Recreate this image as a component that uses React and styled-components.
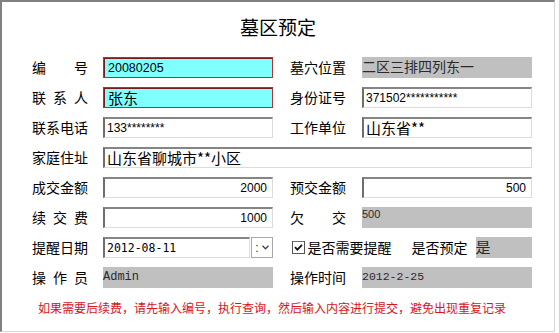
import React from 'react';
import styled, { createGlobalStyle, css } from 'styled-components';

const GlobalStyle = createGlobalStyle`
   html, body {
      margin: 0;
      padding: 0;
      background: #ffffff;
   }
   body {
      font-family: "Noto Sans CJK SC", "Liberation Sans", sans-serif;
      color: #000;
   }
`;

const cjk = `"Noto Sans CJK SC", sans-serif`;

const Frame = styled.div`
   box-sizing: border-box;
   width: 555px;
   height: 332px;
   border-top: 2px solid #808080;
   border-left: 2px solid #808080;
   border-right: 1px solid #d8d8d8;
   border-bottom: 1px solid #d8d8d8;
   background: #ffffff;
   padding-left: 30px;
`;

const Title = styled.h1`
   margin: 0;
   padding-top: 13px;
   margin-left: -30px;
   text-align: center;
   font-family: ${cjk};
   font-size: 19px;
   font-weight: 400;
   line-height: 24px;
   height: 24px;
`;

const FormGrid = styled.div`
   display: grid;
   grid-template-columns: 71px 187px 72px 170px;
   grid-auto-rows: 21px;
   row-gap: 9px;
   margin-top: 18px;
   align-items: center;
`;

const Label = styled.div`
   width: 56px;
   font-family: ${cjk};
   font-size: 14px;
   line-height: 21px;
   white-space: nowrap;
   ${({ spread }) =>
      spread &&
      css`
         text-align: justify;
         text-align-last: justify;
      `};
`;

const fieldVariants = {
   key: css`
      background: #80ffff;
      border: 1px solid #b23030;
      box-shadow: inset 1px 1px 0 #7a1c1c;
      padding-left: 4px;
   `,
   text: css`
      background: #ffffff;
      border-top: 2px solid #858585;
      border-left: 2px solid #6e6e6e;
      border-right: 1px solid #dcdcdc;
      border-bottom: 1px solid #dcdcdc;
      padding-left: 2px;
      padding-right: 5px;
   `,
   readonly: css`
      background: #c0c0c0;
      color: #2a2a2a;
      align-items: flex-start;
   `,
};

const Field = styled.div`
   box-sizing: border-box;
   height: 21px;
   width: ${({ w }) => (w ? `${w}px` : '170px')};
   display: flex;
   align-items: center;
   justify-content: ${({ right }) => (right ? 'flex-end' : 'flex-start')};
   font-family: ${({ font }) => font || `"Liberation Sans", ${cjk}`};
   font-size: ${({ size }) => size || 12}px;
   white-space: nowrap;
   ${({ variant }) => fieldVariants[variant || 'text']};
   ${({ span }) =>
      span &&
      css`
         grid-column: ${span};
         width: auto;
      `};
`;

const FieldText = styled.span`
   line-height: ${({ lh }) => lh || 18}px;
   margin-top: ${({ up }) => (up ? -up : 0)}px;
`;

const DateCell = styled.div`
   display: flex;
   align-items: center;
   gap: 1px;
`;

const DropButton = styled.div`
   box-sizing: border-box;
   width: 22px;
   height: 21px;
   border: 1px solid #a8a8a8;
   background: #ffffff;
   display: flex;
   align-items: center;
   justify-content: center;
   gap: 3px;
   font-family: "Liberation Sans", sans-serif;
   font-size: 12px;
   color: #333;
`;

const OptionsCell = styled.div`
   grid-column: 3 / 5;
   display: flex;
   align-items: center;
   padding-left: 2px;
`;

const CheckBox = styled.span`
   box-sizing: border-box;
   width: 13px;
   height: 13px;
   border: 1px solid #555;
   border-top-color: #6b6b6b;
   background: #fff;
   display: inline-flex;
   align-items: center;
   justify-content: center;
`;

const OptionText = styled.span`
   font-family: ${cjk};
   font-size: 14px;
   line-height: 21px;
   margin-left: ${({ gap }) => gap}px;
   white-space: nowrap;
`;

const Note = styled.p`
   margin: 13px 0 0 6px;
   font-family: ${cjk};
   font-size: 12px;
   line-height: 14px;
   color: #d8141c;
   white-space: nowrap;
`;

const mono = `"Liberation Mono", monospace`;
const sansMono = `"DejaVu Sans Mono", monospace`;

const Check = () => (
   <svg width="9" height="9" viewBox="0 0 9 9">
      <path d="M1 4.2 L3.4 6.6 L8 1.8" stroke="#111" strokeWidth="1.8" fill="none" />
   </svg>
);

const Chevron = () => (
   <svg width="7" height="5" viewBox="0 0 7 5">
      <path d="M0.5 0.8 L3.5 3.8 L6.5 0.8" stroke="#444" strokeWidth="1.3" fill="none" />
   </svg>
);

const App = () => (
   <>
      <GlobalStyle />
      <Frame>
         <Title>墓区预定</Title>
         <FormGrid>
            <Label spread>编号</Label>
            <Field variant="key" size={12.5}>
               <FieldText>20080205</FieldText>
            </Field>
            <Label>墓穴位置</Label>
            <Field variant="readonly" size={14} font={cjk}>
               <FieldText lh={18}>二区三排四列东一</FieldText>
            </Field>

            <Label spread>联系人</Label>
            <Field variant="key" size={15} font={cjk}>
               <FieldText>张东</FieldText>
            </Field>
            <Label>身份证号</Label>
            <Field variant="text" size={12}>
               <FieldText>371502***********</FieldText>
            </Field>

            <Label>联系电话</Label>
            <Field variant="text" size={12}>
               <FieldText>133********</FieldText>
            </Field>
            <Label>工作单位</Label>
            <Field variant="text" size={15} font={cjk}>
               <FieldText>山东省**</FieldText>
            </Field>

            <Label>家庭住址</Label>
            <Field variant="text" size={15} font={cjk} span="2 / 5">
               <FieldText>山东省聊城市**小区</FieldText>
            </Field>

            <Label>成交金额</Label>
            <Field variant="text" right size={12}>
               <FieldText>2000</FieldText>
            </Field>
            <Label>预交金额</Label>
            <Field variant="text" right size={12}>
               <FieldText>500</FieldText>
            </Field>

            <Label spread>续交费</Label>
            <Field variant="text" right size={12}>
               <FieldText>1000</FieldText>
            </Field>
            <Label spread>欠交</Label>
            <Field variant="readonly" size={11}>
               <FieldText lh={14}>500</FieldText>
            </Field>

            <Label>提醒日期</Label>
            <DateCell>
               <Field variant="text" w={147} size={11.5} font={sansMono}>
                  <FieldText>2012-08-11</FieldText>
               </Field>
               <DropButton>
                  <span>:</span>
                  <Chevron />
               </DropButton>
            </DateCell>
            <OptionsCell>
               <CheckBox>
                  <Check />
               </CheckBox>
               <OptionText gap={3}>是否需要提醒</OptionText>
               <OptionText gap={20}>是否预定</OptionText>
               <Field variant="readonly" w={59} size={15} font={cjk} style={{ marginLeft: 8 }}>
                  <FieldText lh={19}>是</FieldText>
               </Field>
            </OptionsCell>

            <Label spread>操作员</Label>
            <Field variant="readonly" size={12} font={mono}>
               <FieldText lh={20}>Admin</FieldText>
            </Field>
            <Label>操作时间</Label>
            <Field variant="readonly" size={11.5} font={mono}>
               <FieldText lh={20}>2012-2-25</FieldText>
            </Field>
         </FormGrid>
         <Note>如果需要后续费，请先输入编号，执行查询，然后输入内容进行提交，避免出现重复记录</Note>
      </Frame>
   </>
);

export default App;
